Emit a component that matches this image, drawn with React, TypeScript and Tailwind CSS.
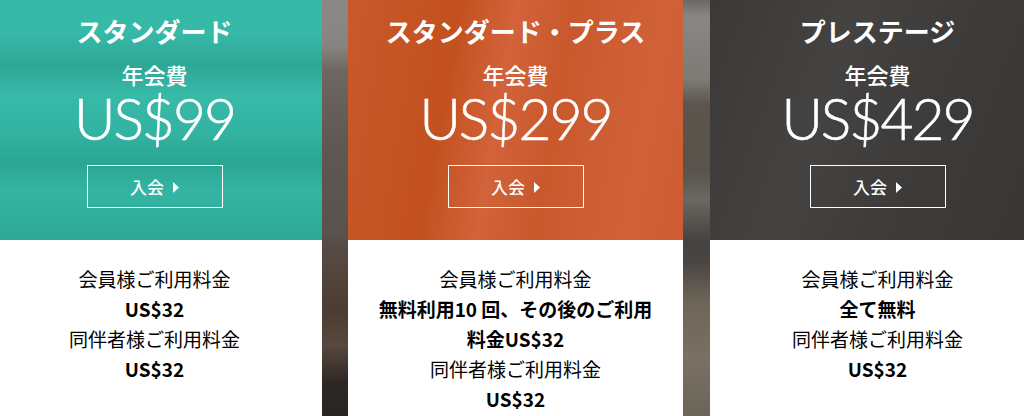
import React from "react";

const cjk = "font-['Noto_Sans_CJK_JP','Noto_Sans',sans-serif]";

function Card({
  title,
  price,
  topBg,
  lines,
}: {
  title: string;
  price: string;
  topBg: string;
  lines: { text: string; bold?: boolean }[];
}) {
  return (
    <div className={`w-[335px] shrink-0 flex flex-col ${cjk}`}>
      <div className={`h-[240px] flex flex-col items-center text-white ${topBg}`}>
        <div className="pt-[16px] text-[26px] leading-[30px] font-bold">{title}</div>
        <div className="mt-[17px] text-[22px] leading-[22px] font-medium">年会費</div>
        <div className="mt-[8px] font-['Lato','Open_Sans',sans-serif] font-light text-[57px] leading-[50px] h-[50px] tracking-[-2px] [-webkit-text-stroke:0.6px_white]">
          {price}
        </div>
        <div className="mt-[22px] w-[136px] h-[43px] border border-white flex items-center justify-center gap-[9px]">
          <span className="text-[17px] font-medium leading-none">入会</span>
          <svg width="6" height="11" viewBox="0 0 6 11" className="mt-[1px]">
            <polygon points="0,0 6,5.5 0,11" fill="white" />
          </svg>
        </div>
      </div>
      <div className="flex-1 bg-white pt-[24px] px-[24px] flex flex-col items-center text-center text-black text-[19px] leading-[30px]">
        {lines.map((l, i) => (
          <div key={i} className={l.bold ? "font-bold" : "font-normal"}>
            {l.text}
          </div>
        ))}
      </div>
    </div>
  );
}

export default function App() {
  return (
    <div className="w-[1024px] h-[416px] overflow-hidden flex bg-white">
      <div className="flex ml-[-13px] h-full">
        <Card
          title="スタンダード"
          price="US$99"
          topBg="bg-[linear-gradient(180deg,#36b8a7_0%,#37b9a8_14%,#2da796_27%,#38baa9_40%,#33b3a2_55%,#2aa693_68%,#34b5a4_80%,#2da895_100%)]"
          lines={[
            { text: "会員様ご利用料金" },
            { text: "US$32", bold: true },
            { text: "同伴者様ご利用料金" },
            { text: "US$32", bold: true },
          ]}
        />
        <div className="w-[26px] shrink-0 bg-[linear-gradient(180deg,#8a8886_0%,#878480_11%,#6e6660_17%,#5f5852_35%,#5a534d_55%,#554840_62%,#4c3d33_75%,#58483e_83%,#2e2825_92%,#2a2522_100%)]" />
        <Card
          title="スタンダード・プラス"
          price="US$299"
          topBg="bg-[linear-gradient(100deg,#c9582b_0%,#c3511f_30%,#d2633a_45%,#c9592c_60%,#d16139_85%,#cd5c32_100%)]"
          lines={[
            { text: "会員様ご利用料金" },
            { text: "無料利用10 回、その後のご利用料金US$32", bold: true },
            { text: "同伴者様ご利用料金" },
            { text: "US$32", bold: true },
          ]}
        />
        <div className="w-[27px] shrink-0 bg-[linear-gradient(180deg,#6a6864_0%,#888784_4%,#7e7b76_19%,#5b554d_25%,#58534b_41%,#6b6863_48%,#45423f_58%,#4a4542_63%,#6d6458_72%,#7a7165_86%,#6b6459_100%)]" />
        <Card
          title="プレステージ"
          price="US$429"
          topBg="bg-[linear-gradient(110deg,#3b3937_0%,#454341_35%,#3e3c3a_60%,#383634_100%)]"
          lines={[
            { text: "会員様ご利用料金" },
            { text: "全て無料", bold: true },
            { text: "同伴者様ご利用料金" },
            { text: "US$32", bold: true },
          ]}
        />
      </div>
    </div>
  );
}
